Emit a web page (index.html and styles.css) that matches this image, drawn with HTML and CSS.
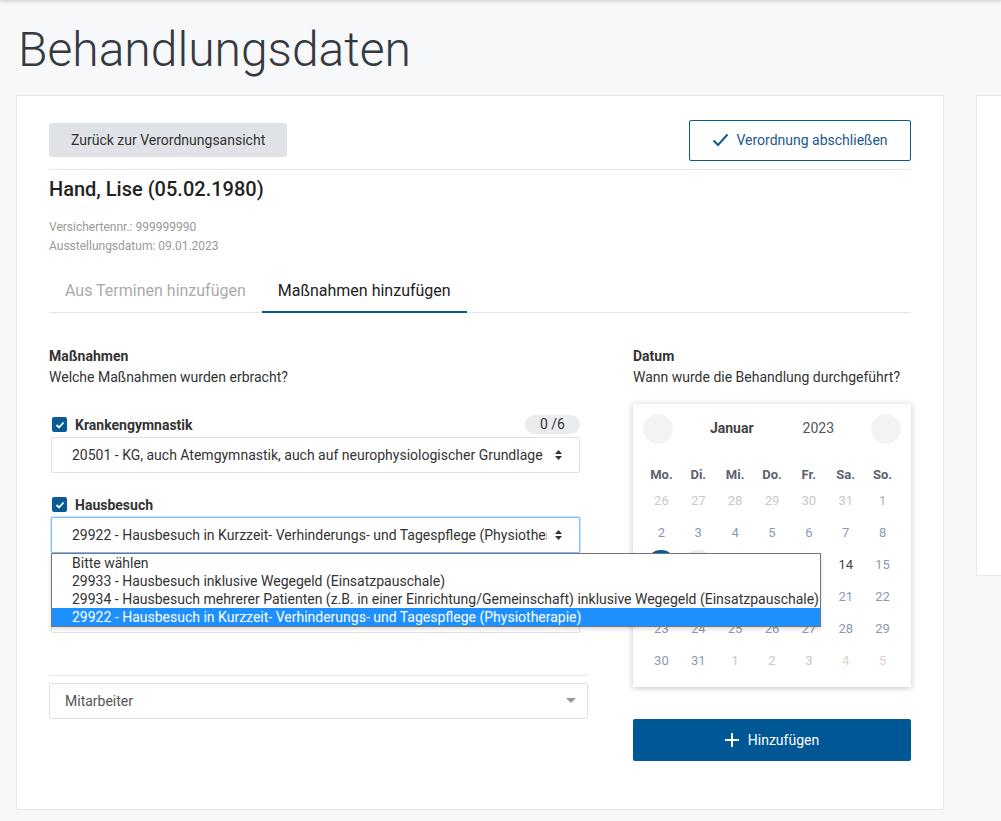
FILE: index.html
```html
<!DOCTYPE html>
<html lang="de">
<head>
  <meta charset="UTF-8" />
  <meta name="viewport" content="width=device-width, initial-scale=1.0" />
  <title>Behandlungsdaten</title>
  <link rel="stylesheet" href="styles.css">
</head>
<body>
  <div class="topbar"></div>

  <div class="page">
    <h1>Behandlungsdaten</h1>

    <div class="cards">
      <div class="card">
        <div class="card-head">
          <button class="btn-back">Zurück zur Verordnungsansicht</button>
          <button class="btn-finish">
            <svg width="17" height="14" viewBox="0 0 17 14"><path d="M1.5 7.5 L6 12 L15.5 1.5" fill="none" stroke="#0a5a96" stroke-width="2"/></svg>
            Verordnung abschließen
          </button>
        </div>

        <h2 class="patient">Hand, Lise (05.02.1980)</h2>
        <p class="meta">Versichertennr.: 999999990<br>Ausstellungsdatum: 09.01.2023</p>

        <nav class="tabs">
          <a class="tab">Aus Terminen hinzufügen</a>
          <a class="tab active">Maßnahmen hinzufügen</a>
        </nav>

        <div class="columns">
          <div class="col-left">
            <div class="label">Maßnahmen</div>
            <div class="sub">Welche Maßnahmen wurden erbracht?</div>

            <div class="group first">
              <div class="group-row">
                <span class="check"><svg width="10" height="8" viewBox="0 0 10 8"><path d="M1.5 4 L4 6.5 L8.5 1.5" fill="none" stroke="#fff" stroke-width="1.8"/></svg></span>
                <span class="group-name">Krankengymnastik</span>
                <span class="badge">0 /6</span>
              </div>
              <div class="select">
                <span class="select-text">20501 - KG, auch Atemgymnastik, auch auf neurophysiologischer Grundlage</span>
                <svg class="arrows" width="9" height="12" viewBox="0 0 9 12"><path d="M4.5 1 L8 5 H1 Z M4.5 11 L8 7 H1 Z" fill="#333"/></svg>
              </div>
            </div>

            <div class="group">
              <div class="group-row">
                <span class="check"><svg width="10" height="8" viewBox="0 0 10 8"><path d="M1.5 4 L4 6.5 L8.5 1.5" fill="none" stroke="#fff" stroke-width="1.8"/></svg></span>
                <span class="group-name">Hausbesuch</span>
              </div>
              <div class="select focus">
                <span class="select-text">29922 - Hausbesuch in Kurzzeit- Verhinderungs- und Tagespflege (Physiotherapie)</span>
                <svg class="arrows" width="9" height="12" viewBox="0 0 9 12"><path d="M4.5 1 L8 5 H1 Z M4.5 11 L8 7 H1 Z" fill="#333"/></svg>
                <ul class="dropdown">
                  <li>Bitte wählen</li>
                  <li>29933 - Hausbesuch inklusive Wegegeld (Einsatzpauschale)</li>
                  <li>29934 - Hausbesuch mehrerer Patienten (z.B. in einer Einrichtung/Gemeinschaft) inklusive Wegegeld (Einsatzpauschale)</li>
                  <li class="selected">29922 - Hausbesuch in Kurzzeit- Verhinderungs- und Tagespflege (Physiotherapie)</li>
                </ul>
              </div>
            </div>

            <div class="group">
              <div class="group-row"></div>
              <div class="select"></div>
            </div>

            <div class="staff">
              <div class="staff-select">
                <span>Mitarbeiter</span>
                <svg width="10" height="5" viewBox="0 0 10 5"><path d="M0 0 H10 L5 5 Z" fill="#999"/></svg>
              </div>
            </div>
          </div>

          <div class="col-right">
            <div class="label">Datum</div>
            <div class="sub">Wann wurde die Behandlung durchgeführt?</div>

            <div class="calendar">
              <div class="cal-nav">
                <span class="cal-btn"></span>
                <div class="cal-title">
                  <span class="cal-month">Januar</span>
                  <span class="cal-year">2023</span>
                </div>
                <span class="cal-btn"></span>
              </div>
              <div class="cal-grid">
                <span class="wd">Mo.</span><span class="wd">Di.</span><span class="wd">Mi.</span><span class="wd">Do.</span><span class="wd">Fr.</span><span class="wd">Sa.</span><span class="wd">So.</span>

                <span class="day other">26</span><span class="day other">27</span><span class="day other">28</span><span class="day other">29</span><span class="day other">30</span><span class="day other">31</span><span class="day first">1</span>

                <span class="day">2</span><span class="day">3</span><span class="day">4</span><span class="day">5</span><span class="day">6</span><span class="day">7</span><span class="day">8</span>

                <span class="day"><b class="sel">9</b></span><span class="day"><b class="hover">10</b></span><span class="day">11</span><span class="day">12</span><span class="day">13</span><span class="day today">14</span><span class="day">15</span>

                <span class="day">16</span><span class="day">17</span><span class="day">18</span><span class="day">19</span><span class="day">20</span><span class="day">21</span><span class="day">22</span>

                <span class="day">23</span><span class="day">24</span><span class="day">25</span><span class="day">26</span><span class="day">27</span><span class="day">28</span><span class="day">29</span>

                <span class="day">30</span><span class="day">31</span><span class="day other">1</span><span class="day other">2</span><span class="day other">3</span><span class="day other weekend">4</span><span class="day other weekend">5</span>
              </div>
            </div>

            <button class="btn-add">
              <svg width="14" height="14" viewBox="0 0 14 14"><path d="M7 0 V14 M0 7 H14" stroke="#fff" stroke-width="2"/></svg>
              Hinzufügen
            </button>
          </div>
        </div>
      </div>

      <div class="card-side"></div>
    </div>
  </div>
</body>
</html>
```

FILE: styles.css
```css
body {
  font-family: Roboto, "Liberation Sans", Arial, sans-serif;
  background-color: #f7f8fa;
  color: #333;
  margin: 0;
  padding: 0;
  overflow: hidden;
  font-size: 14px;
}
.topbar {
  height: 1px;
  background-color: #ddd;
  box-shadow: 0 1px 3px rgba(0, 0, 0, 0.25);
}
.page {
  padding-left: 16px;
}
h1 {
  font-size: 48px;
  font-weight: 300;
  line-height: 1.2;
  color: #343a40;
  margin: 20px 0 16px 2px;
}
.cards {
  display: flex;
  gap: 32px;
  align-items: flex-start;
}
.card {
  flex: 0 0 928px;
  box-sizing: border-box;
  background-color: #fff;
  border: 1px solid #e6e8eb;
  padding: 24px 32px 48px 32px;
}
.card-side {
  flex: 0 0 200px;
  height: 479px;
  background-color: #fff;
  border: 1px solid #e6e8eb;
}

/* Kopfzeile */
.card-head {
  display: flex;
  justify-content: space-between;
  align-items: center;
  padding-bottom: 8px;
  border-bottom: 1px solid #e8e8e8;
}
.btn-back {
  font-family: inherit;
  font-size: 14px;
  color: #333;
  background-color: #dfe2e6;
  border: none;
  border-radius: 2px;
  height: 34px;
  padding: 0 22px;
}
.btn-finish {
  font-family: inherit;
  font-size: 14px;
  color: #23588a;
  background-color: #fff;
  border: 1px solid #0a5a96;
  border-radius: 2px;
  height: 41px;
  width: 222px;
  display: flex;
  align-items: center;
  justify-content: center;
  gap: 7px;
}
.patient {
  font-size: 20px;
  font-weight: 500;
  line-height: 24px;
  color: #222;
  margin: 7px 0 0;
}
.meta {
  font-size: 12px;
  line-height: 19px;
  color: #999;
  margin: 17px 0 0;
}

/* Tabs */
.tabs {
  display: flex;
  margin-top: 14px;
  border-bottom: 1px solid #e6e6e6;
}
.tab {
  font-size: 16px;
  line-height: 19px;
  padding: 11px 16px 11px;
  color: #aaa;
  border-bottom: 2px solid transparent;
  margin-bottom: -1px;
}
.tab.active {
  color: #222;
  border-bottom-color: #0a5a96;
}

/* Spalten */
.columns {
  display: grid;
  grid-template-columns: 539px 278px;
  column-gap: 45px;
  margin-top: 33px;
}
.label {
  font-weight: bold;
  line-height: 21px;
  color: #333;
}
.sub {
  line-height: 21px;
  color: #333;
}
.group {
  margin: 22px 8px 0 2px;
}
.group.first {
  margin-top: 27px;
}
.group-row {
  display: flex;
  align-items: center;
  height: 20px;
}
.check {
  width: 15px;
  height: 15px;
  border-radius: 2px;
  background-color: #0a5a96;
  display: flex;
  align-items: center;
  justify-content: center;
  margin: 0 8px 0 1px;
}
.group-name {
  font-weight: bold;
  color: #333;
}
.badge {
  margin-left: auto;
  width: 55px;
  height: 19px;
  line-height: 19px;
  text-align: center;
  border-radius: 10px;
  background-color: #e9ecef;
  color: #333;
}
.select {
  position: relative;
  margin-top: 2px;
  height: 36px;
  box-sizing: border-box;
  border: 1px solid #dee2e6;
  border-radius: 2px;
  display: flex;
  align-items: center;
  padding: 0 16px 0 20px;
  background-color: #fff;
}
.select.focus {
  border-color: #80bdff;
  box-shadow: 0 0 0 1px rgba(0, 123, 255, 0.2);
}
.select-text {
  flex: 1;
  white-space: nowrap;
  overflow: hidden;
  margin-right: 7px;
}
.dropdown {
  position: absolute;
  top: 35px;
  left: -1px;
  width: 770px;
  box-sizing: border-box;
  margin: 0;
  padding: 0;
  list-style: none;
  background-color: #fff;
  border: 1px solid #767676;
  box-shadow: 0 2px 4px rgba(0, 0, 0, 0.15);
  z-index: 10;
}
.dropdown li {
  line-height: 18px;
  padding-left: 20px;
  white-space: nowrap;
  color: #333;
}
.dropdown li.selected {
  background-color: #1e90ff;
  color: #fff;
}
.staff {
  margin-top: 42px;
  padding-top: 7px;
  border-top: 1px solid #e6e6e6;
}
.staff-select {
  height: 36px;
  box-sizing: border-box;
  border: 1px solid #dee2e6;
  border-radius: 2px;
  display: flex;
  align-items: center;
  justify-content: space-between;
  padding: 0 11px 0 15px;
  color: #555;
}

/* Kalender */
.calendar {
  margin-top: 16px;
  background-color: #fff;
  box-shadow: 0 1px 6px rgba(0, 0, 0, 0.25);
  padding: 10px 10px 10px;
}
.cal-nav {
  display: flex;
  align-items: center;
  justify-content: space-between;
}
.cal-btn {
  width: 30px;
  height: 30px;
  border-radius: 50%;
  background-color: #f3f3f3;
}
.cal-title {
  display: flex;
  gap: 49px;
  margin-top: -2px;
}
.cal-month {
  font-weight: bold;
  color: #444;
}
.cal-year {
  color: #555;
}
.cal-grid {
  display: grid;
  grid-template-columns: repeat(7, 1fr);
  grid-template-rows: 20px;
  grid-auto-rows: 32px;
  margin-top: 21px;
}
.wd {
  font-size: 13px;
  font-weight: bold;
  color: #5a6270;
  text-align: center;
  line-height: 20px;
}
.day {
  font-size: 13px;
  color: #8c9ab0;
  display: flex;
  align-items: center;
  justify-content: center;
}
.day.other {
  color: #c9c9c9;
}
.day.weekend {
  color: #dcd4c8;
}
.day.first {
  color: #a6adb8;
}
.day.today {
  color: #444;
}
.day b {
  font-weight: normal;
  width: 30px;
  height: 30px;
  border-radius: 50%;
  display: flex;
  align-items: center;
  justify-content: center;
}
.day b.sel {
  background-color: #0a5a96;
  color: #fff;
}
.day b.hover {
  background-color: #e9ecef;
}
.btn-add {
  margin-top: 32px;
  width: 100%;
  height: 42px;
  font-family: inherit;
  font-size: 14px;
  color: #fff;
  background-color: #005796;
  border: none;
  border-radius: 2px;
  display: flex;
  align-items: center;
  justify-content: center;
  gap: 9px;
}
```
